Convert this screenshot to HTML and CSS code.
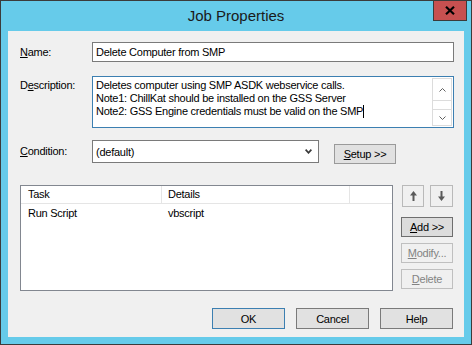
FILE: index.html
```html
<!DOCTYPE html>
<html lang="en">
<head>
    <meta charset="UTF-8">
    <title>Job Properties</title>
    <link rel="stylesheet" href="styles.css">
</head>
<body>

    <div class="window">
        <div class="titlebar">
            <span class="title">Job Properties</span>
            <button class="close">
                <svg width="10" height="9" viewBox="0 0 10 9"><path d="M1 0.8 L9 8.2 M9 0.8 L1 8.2" stroke="#000" stroke-width="2.2"/></svg>
            </button>
        </div>

        <div class="client">
            <div class="row row-name">
                <label class="lbl"><u>N</u>ame:</label>
                <div class="textbox">Delete Computer from SMP</div>
            </div>

            <div class="row row-desc">
                <label class="lbl">D<u>e</u>scription:</label>
                <div class="memo">
                    <div class="memo-text">
                        <div>Deletes computer using SMP ASDK webservice calls.</div>
                        <div>Note1: ChillKat should be installed on the GSS Server</div>
                        <div>Note2: GSS Engine credentials must be valid on the SMP<span class="caret"></span></div>
                    </div>
                    <div class="vscroll">
                        <span class="sb-btn sb-up"><svg width="7" height="4" viewBox="0 0 7 4"><path d="M0.5 3.5 L3.5 0.5 L6.5 3.5" fill="none" stroke="#606060"/></svg></span>
                        <span class="sb-track"></span>
                        <span class="sb-btn sb-down"><svg width="7" height="4" viewBox="0 0 7 4"><path d="M0.5 0.5 L3.5 3.5 L6.5 0.5" fill="none" stroke="#606060"/></svg></span>
                    </div>
                </div>
            </div>

            <div class="row row-cond">
                <label class="lbl"><u>C</u>ondition:</label>
                <div class="combo">
                    <span>(default)</span>
                    <svg width="7" height="5" viewBox="0 0 7 5"><path d="M0.6 0.6 L3.5 3.8 L6.4 0.6" fill="none" stroke="#3a3a3a" stroke-width="1.7"/></svg>
                </div>
                <button class="btn setup"><u>S</u>etup &gt;&gt;</button>
            </div>

            <div class="tasks">
                <div class="listview">
                    <div class="lv-head">
                        <span class="col-task">Task</span>
                        <span class="col-details">Details</span>
                        <span class="col-fill"></span>
                    </div>
                    <div class="lv-row">
                        <span class="col-task">Run Script</span>
                        <span class="col-details">vbscript</span>
                    </div>
                </div>

                <div class="side">
                    <div class="arrows">
                        <button class="arrow arrow-up">
                            <svg width="7" height="10" viewBox="0 0 7 10"><path d="M3.5 0 L7 4.5 H4.5 V10 H2.5 V4.5 H0 Z" fill="#5a5a5a"/></svg>
                        </button>
                        <button class="arrow arrow-down">
                            <svg width="7" height="10" viewBox="0 0 7 10"><path d="M3.5 10 L7 5.5 H4.5 V0 H2.5 V5.5 H0 Z" fill="#5a5a5a"/></svg>
                        </button>
                    </div>
                    <button class="btn side-btn btn-hot"><u>A</u>dd &gt;&gt;</button>
                    <button class="btn side-btn btn-off"><u>M</u>odify...</button>
                    <button class="btn side-btn btn-off"><u>D</u>elete</button>
                </div>
            </div>

            <div class="footer">
                <button class="btn foot-btn btn-default">OK</button>
                <button class="btn foot-btn">Cancel</button>
                <button class="btn foot-btn">Help</button>
            </div>
        </div>
    </div>

</body>
</html>
```

FILE: styles.css
```css
body {
    margin: 0;
    font-family: "Liberation Sans", Arial, sans-serif;
    font-size: 11px;
    letter-spacing: -0.25px;
    color: #000;
}
u {
    text-decoration: underline;
    text-underline-offset: 1px;
}
.window {
    width: 472px;
    height: 345px;
    box-sizing: border-box;
    border: 1px solid #3b3b3b;
    background-color: #66cbea;
    display: flex;
    flex-direction: column;
}
.titlebar {
    height: 30px;
    display: flex;
    align-items: flex-start;
}
.title {
    flex: 1;
    text-align: center;
    font-size: 15px;
    letter-spacing: 0;
    line-height: 30px;
    padding-left: 38px;
    color: #1a1a1a;
}
.close {
    width: 34px;
    height: 21px;
    margin-top: -1px;
    margin-right: 4px;
    padding: 0;
    border: 1px solid #3b3b3b;
    background-color: #c75050;
    display: flex;
    align-items: center;
    justify-content: center;
}
.client {
    flex: 1;
    margin: 0 7px 7px 7px;
    background-color: #f0f0f0;
    display: flex;
    flex-direction: column;
}
.row {
    display: flex;
    padding-left: 12px;
}
.lbl {
    width: 72px;
    flex-shrink: 0;
}
.row-name {
    margin-top: 11px;
    align-items: center;
}
.textbox {
    width: 362px;
    height: 20px;
    box-sizing: border-box;
    border: 1px solid #7a7a7a;
    background-color: #fff;
    padding-left: 3px;
    line-height: 18px;
}
.row-desc {
    margin-top: 14px;
}
.row-desc .lbl {
    padding-top: 3px;
}
.memo {
    width: 362px;
    height: 52px;
    box-sizing: border-box;
    border: 1px solid #3c7fb1;
    background-color: #fff;
    display: flex;
}
.memo-text {
    flex: 1;
    padding: 2px 0 0 3px;
    line-height: 13px;
}
.caret {
    display: inline-block;
    width: 1px;
    height: 13px;
    background-color: #000;
    vertical-align: top;
}
.vscroll {
    width: 20px;
    margin: 1px 1px 1px 0;
    display: flex;
    flex-direction: column;
}
.sb-btn {
    height: 23px;
    box-sizing: border-box;
    border: 1px solid #dcdcdc;
    display: flex;
    align-items: center;
    justify-content: center;
}
.sb-down {
    height: 17px;
}
.sb-track {
    flex: 1;
    border-left: 1px solid #dcdcdc;
    border-right: 1px solid #dcdcdc;
}
.row-cond {
    margin-top: 12px;
    height: 23px;
    align-items: flex-start;
}
.row-cond .lbl {
    padding-top: 5px;
}
.combo {
    width: 227px;
    height: 23px;
    box-sizing: border-box;
    border: 1px solid #7a7a7a;
    background-color: #fff;
    padding: 0 6px 0 3px;
    display: flex;
    align-items: center;
    justify-content: space-between;
}
.btn {
    font-family: inherit;
    font-size: 11px;
    letter-spacing: -0.25px;
    color: #000;
    height: 21px;
    padding: 0;
    box-sizing: border-box;
    border: 1px solid #7a7a7a;
    background-color: #e1e1e1;
}
.setup {
    width: 62px;
    height: 20px;
    margin-left: 15px;
    margin-top: 4px;
    border-color: #9a9a9a;
}
.tasks {
    margin-top: 22px;
    padding-left: 12px;
    display: flex;
    align-items: flex-start;
}
.listview {
    width: 373px;
    height: 106px;
    box-sizing: border-box;
    border: 1px solid #828790;
    background-color: #fff;
}
.lv-head {
    display: flex;
    height: 17px;
    border-bottom: 1px solid #e5e5e5;
    line-height: 17px;
}
.lv-head span {
    box-sizing: border-box;
    border-right: 1px solid #e5e5e5;
}
.col-task {
    width: 141px;
    padding-left: 7px;
    box-sizing: border-box;
}
.col-details {
    width: 188px;
    padding-left: 6px;
    box-sizing: border-box;
}
.col-fill {
    flex: 1;
}
.lv-head .col-fill {
    border-right: none;
}
.lv-row {
    display: flex;
    height: 18px;
    line-height: 18px;
}
.side {
    margin-left: 8px;
    width: 52px;
    display: flex;
    flex-direction: column;
}
.arrows {
    display: flex;
    gap: 6px;
    padding-left: 1px;
}
.arrow {
    width: 22px;
    height: 22px;
    padding: 0;
    box-sizing: border-box;
    border: 1px solid #b9b9b9;
    background-color: #f0f0f0;
    display: flex;
    align-items: center;
    justify-content: center;
}
.arrow-down {
    width: 23px;
}
.side-btn {
    width: 52px;
    height: 20px;
    margin-top: 6px;
}
.btn-hot {
    margin-top: 10px;
    border-color: #6e6e6e;
    background-color: #dcdcdc;
}
.btn-off {
    color: #838383;
    border-color: #bfbfbf;
    background-color: #f0f0f0;
}
.footer {
    margin-top: 17px;
    padding-right: 11px;
    display: flex;
    justify-content: flex-end;
    gap: 11px;
}
.foot-btn {
    width: 73px;
}
.btn-default {
    border-color: #3c7fb1;
}
```
